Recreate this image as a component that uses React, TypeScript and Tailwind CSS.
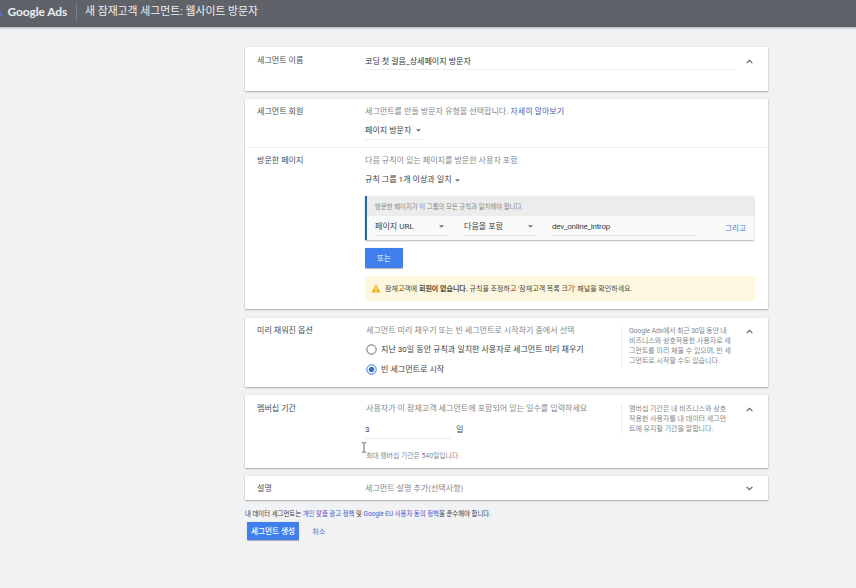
import type { ReactNode } from "react";

const FONT = "font-['Roboto','Noto_Sans_CJK_KR',sans-serif]";

function Chevron({ down = false }: { down?: boolean }) {
  return (
    <svg className={`h-[5px] w-[7px] ${down ? "rotate-180" : ""}`} viewBox="0 0 7 5" fill="none" stroke="#5f6368" strokeWidth="1.2">
      <path d="M0.6 4.2 3.5 1.3 6.4 4.2" />
    </svg>
  );
}

function Caret() {
  return (
    <svg className="h-[3px] w-[5px] shrink-0" viewBox="0 0 5 3" fill="#6b6e72">
      <path d="M0 0.2h5L2.5 2.8z" />
    </svg>
  );
}

function Card({ className, children }: { className: string; children: ReactNode }) {
  return (
    <section className={`flex w-[523px] shrink-0 bg-white shadow-[0_1px_1.5px_rgba(60,64,67,0.38),0_0_1.5px_rgba(60,64,67,0.14)] ${className}`}>
      {children}
    </section>
  );
}

function Label({ children }: { children: ReactNode }) {
  return <div className="w-[120px] shrink-0 pl-3 text-[#4b4e52]">{children}</div>;
}

function Help({ className, lines }: { className: string; lines: { text: string; style: string }[] }) {
  return (
    <div className={`w-[112px] shrink-0 border-l border-[#ececec] pl-[7px] text-[7px] text-[#85888b] ${className}`}>
      {lines.map((l) => (
        <p key={l.text} className={l.style}>{l.text}</p>
      ))}
    </div>
  );
}

function Radio({ checked = false }: { checked?: boolean }) {
  const color = checked ? "#2f73ca" : "#66696d";
  return (
    <svg className="size-[11px] shrink-0" viewBox="0 0 11 11">
      <circle cx="5.5" cy="5.5" r="4.7" fill="none" stroke={color} strokeWidth="1" />
      {checked && <circle cx="5.5" cy="5.5" r="2.7" fill={color} />}
    </svg>
  );
}

export default function App() {
  return (
    <div className={`relative flex h-[588px] w-[856px] flex-col overflow-hidden whitespace-nowrap bg-[#f0f2f4] text-[8.06px] leading-[10px] text-[#3c4043] ${FONT}`}>
      <header className="flex h-[27px] shrink-0 items-start bg-[#5f6268] text-[#eceef0] shadow-[0_1px_2px_rgba(0,0,0,0.3)]">
        <svg className="mt-[10px] h-[7px] w-[7.5px]" viewBox="0 0 7.5 7" fill="#5c6fc0">
          <path d="M0 0 2 5.5 0 6.5z" />
        </svg>
        <span className="mt-1 w-[68.5px] font-['Lato',sans-serif] text-[12px] font-bold leading-4 tracking-[-0.12px]">Google Ads</span>
        <span className="mt-1 h-4 w-px bg-[#7b7e83]" />
        <h1 className="ml-2 mt-1 text-[10.85px] leading-4">새 잠재고객 세그먼트: 웹사이트 방문자</h1>
      </header>

      <main className="ml-[245px] flex flex-col pt-5">
        <Card className="h-[44px] pt-[9px]">
          <Label>세그먼트 이름</Label>
          <div className="h-[14px] w-[371px] border-b border-[#efefef] pt-px text-[#303336]">코딩 첫 걸음_상세페이지 방문자</div>
          <div className="ml-[10px] mt-[3px]"><Chevron /></div>
        </Card>

        <Card className="mt-[8px] h-[210px] flex-col">
          <div className="flex h-[49px] border-b border-[#f2f2f2] pt-[8px]">
            <Label>세그먼트 회원</Label>
            <div>
              <p className="text-[#85888b]">
                세그먼트를 만들 방문자 유형을 선택합니다. <a className="text-[#4d5db5]">자세히 알아보기</a>
              </p>
              <div className="mt-[9px] flex h-[14px] w-[59px] items-start justify-between border-b border-[#eeeeee] pr-[3px]">
                페이지 방문자 <span className="mt-[3px] flex"><Caret /></span>
              </div>
            </div>
          </div>
          <div className="flex pt-[8px]">
            <Label>방문한 페이지</Label>
            <div className="w-[390px]">
              <p className="text-[#85888b]">다음 규칙이 있는 페이지를 방문한 사용자 포함</p>
              <div className="mt-[9px] flex items-center gap-[3px]">규칙 그룹 1개 이상과 일치 <Caret /></div>
              <div className="mt-[11px] h-[44px] w-[389px] border-l-2 border-[#2463ad] bg-[#f8fafa] shadow-[0_1px_1.5px_rgba(60,64,67,0.4)]">
                <div className="h-5 bg-[#ececec] pl-[8px] pt-[6px] text-[6.4px] text-[#85888b]">
                  방문한 페이지가 이 그룹의 모든 규칙과 일치해야 합니다.
                </div>
                <div className="flex pl-[8px] pt-[6px]">
                  <div className="flex h-[14px] w-[73px] justify-between border-b border-[#dfe1e2] pr-[4px]">
                    페이지 URL <span className="mt-[3px] flex"><Caret /></span>
                  </div>
                  <div className="ml-4 flex h-[14px] w-[73px] justify-between border-b border-[#dfe1e2] pr-[4px]">
                    다음을 포함 <span className="mt-[3px] flex"><Caret /></span>
                  </div>
                  <div className="ml-[15px] h-[14px] w-[145px] border-b border-[#dfe1e2] tracking-[-0.25px]">dev_online_introp</div>
                  <a className="ml-[28px] mt-[2px] text-[7.6px] text-[#5b79cc]">그리고</a>
                </div>
              </div>
              <button className="mt-[8px] flex h-5 w-[38px] items-center justify-center rounded-[1px] bg-[#4080ee] pt-px text-[7.5px] text-white shadow-[0_0.5px_1px_rgba(0,0,0,0.3)]">또는</button>
              <div className="mt-[8px] flex h-[25px] items-center bg-[#fef7df] pl-[6px] text-[7px] text-[#4e4937]">
                <svg className="mr-[4px] h-[9px] w-[10px]" viewBox="0 0 10 9">
                  <path d="M5 0.3 9.7 8.6H0.3z" fill="#eeb52b" />
                  <path d="M5 3.2v2.7M5 6.7v.9" stroke="#fff4c8" strokeWidth=".9" />
                </svg>
                <span>잠재고객에 <b className="font-bold">회원이 없습니다.</b> 규칙을 조정하고 '잠재고객 목록 크기' 패널을 확인하세요.</span>
              </div>
            </div>
          </div>
        </Card>

        <Card className="mt-[9px] h-[69px] pt-2">
          <Label>미리 채워진 옵션</Label>
          <div className="w-[256px] pl-px">
            <p className="text-[#85888b]">세그먼트 미리 채우기 또는 빈 세그먼트로 시작하기 중에서 선택</p>
            <div className="mt-[8px] flex items-center gap-[4px]"><Radio />지난 30일 동안 규칙과 일치한 사용자로 세그먼트 미리 채우기</div>
            <div className="mt-[9px] flex items-center gap-[4px]"><Radio checked />빈 세그먼트로 시작</div>
          </div>
          <Help
            className="h-[41px]"
            lines={[
              { text: "Google Ads에서 최근 30일 동안 내", style: "tracking-[-0.2px]" },
              { text: "비즈니스와 상호작용한 사용자로 세", style: "" },
              { text: "그먼트를 미리 채울 수 있으며, 빈 세", style: "" },
              { text: "그먼트로 시작할 수도 있습니다.", style: "" },
            ]}
          />
          <div className="ml-[13px] mt-[3px]"><Chevron /></div>
        </Card>

        <Card className="mt-[8px] h-[73px] pt-[9px]">
          <Label>멤버십 기간</Label>
          <div className="w-[256px] pl-px">
            <p className="text-[#85888b]">사용자가 이 잠재고객 세그먼트에 포함되어 있는 일수를 입력하세요</p>
            <div className="mt-[11px] flex gap-[4px]">
              <div className="-ml-px h-[14px] w-[87px] border-b border-[#ebebeb]">3</div>
              <span>일</span>
            </div>
            <p className="mt-[12px] text-[6.85px] text-[#85888b]">최대 멤버십 기간은 540일입니다.</p>
          </div>
          <Help
            className="h-[30px]"
            lines={[
              { text: "멤버십 기간은 내 비즈니스와 상호", style: "" },
              { text: "작용한 사용자를 내 데이터 세그먼", style: "" },
              { text: "트에 유지할 기간을 말합니다.", style: "" },
            ]}
          />
          <div className="ml-[13px] mt-[3px]"><Chevron /></div>
        </Card>

        <Card className="mt-[8px] h-[24px] pt-2">
          <Label>설명</Label>
          <div className="w-[381px] text-[#85888b]">세그먼트 설명 추가(선택사항)</div>
          <div className="mt-[2px]"><Chevron down /></div>
        </Card>

        <p className="mt-[9px] text-[6.4px]">
          내 데이터 세그먼트는 <a className="text-[#4d55c4]">개인 맞춤 광고 정책</a> 및 <a className="text-[#4d55c4]">Google EU 사용자 동의 정책</a>을 준수해야 합니다.
        </p>
        <div className="ml-[2px] mt-[3px] flex items-center">
          <button className="h-[18px] w-[52px] rounded-[1px] bg-[#3f80ec] pt-px text-[7.6px] font-medium text-white shadow-[0_0.5px_1px_rgba(0,0,0,0.3)]">세그먼트 생성</button>
          <a className="ml-[13px] pt-px text-[7.4px] text-[#6a72c8]">취소</a>
        </div>
      </main>

      <svg className="absolute left-[361px] top-[442px] h-[11px] w-[6px]" viewBox="0 0 6 11" fill="none" stroke="#55585c" strokeWidth=".9">
        <path d="M.8.8H2.3L3 1.3 3.7.8H5.2M3 1.3V9.7M.8 10.2H2.3L3 9.7l.7.5H5.2" />
      </svg>
    </div>
  );
}
